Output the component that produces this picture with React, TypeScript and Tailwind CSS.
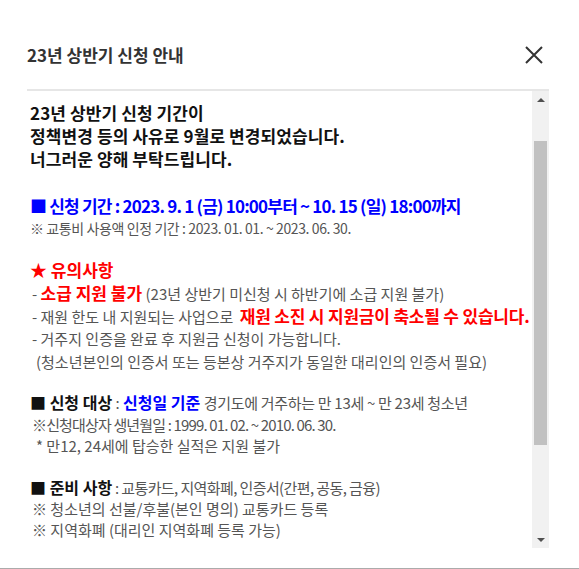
export default function App() {
  return (
    <div
      className="w-[579px] h-[569px] bg-white border-b border-[#ababab] flex flex-col pl-[27px] pr-[30px]"
      style={{ fontFamily: '"Noto Sans CJK KR", "Noto Sans", sans-serif' }}
    >
      {/* Header */}
      <div className="h-[89px] pt-[21px] flex items-center justify-between shrink-0">
        <h2 className="text-[17px] font-bold text-[#333]">23년 상반기 신청 안내</h2>
        <button className="mr-[6px]">
          <svg width="18" height="18" viewBox="0 0 18 18" fill="none" stroke="#333" strokeWidth="2">
            <path d="M1 1L17 17M17 1L1 17" />
          </svg>
        </button>
      </div>
      <div className="h-[2px] bg-[#e6e6e6] shrink-0" />

      {/* Body */}
      <div className="flex h-[457px] shrink-0">
        <div className="flex-1 overflow-hidden pl-[3px] pt-[10px]">
          <div className="text-[17px] font-bold text-[#111] leading-[23px] tracking-[0.1px]">
            <p>23년 상반기 신청 기간이</p>
            <p>정책변경 등의 사유로 9월로 변경되었습니다.</p>
            <p>너그러운 양해 부탁드립니다.</p>
          </div>

          <p className="mt-[24px] text-[17px] font-bold text-[#0000ff] leading-[23px] tracking-[-0.8px]">
            ■ 신청 기간 : 2023. 9. 1 (금) 10:00부터 ~ 10. 15 (일) 18:00까지
          </p>
          <p className="text-[14px] text-[#555] leading-[22px] tracking-[-0.4px]">
            ※ 교통비 사용액 인정 기간 : 2023. 01. 01. ~ 2023. 06. 30.
          </p>

          {/* 유의사항 */}
          <p className="mt-[19px] text-[17px] font-bold text-[#ff0000] leading-[23px]">★ 유의사항</p>
          <div className="mt-[2px] text-[15px] text-[#555] leading-[22.5px]">
            <p className="pl-[2px]">
              - <span className="inline-block text-[17px] leading-[18px] font-bold text-[#ff0000]">소급 지원 불가</span> (23년 상반기 미신청 시 하반기에 소급 지원 불가)
            </p>
            <p className="pl-[2px]">
              - 재원 한도 내 지원되는 사업으로{" "}
              <span className="inline-block ml-[3px] text-[17px] leading-[18px] font-bold text-[#ff0000] tracking-[-0.2px]">
                재원 소진 시 지원금이 축소될 수 있습니다.
              </span>
            </p>
            <p className="pl-[2px]">- 거주지 인증을 완료 후 지원금 신청이 가능합니다.</p>
            <p className="pl-[6px]">(청소년본인의 인증서 또는 등본상 거주지가 동일한 대리인의 인증서 필요)</p>
          </div>

          {/* 신청 대상 */}
          <div className="mt-[19px] text-[15px] text-[#555] leading-[21.5px]">
            <p>
              <span className="inline-block text-[16px] leading-[18px] font-bold text-[#111]">■ 신청 대상</span> :{" "}
              <span className="inline-block text-[16px] leading-[18px] font-bold text-[#0000ff]">신청일 기준</span>{" "}
              <span className="tracking-[-0.3px]">경기도에 거주하는 만 13세 ~ 만 23세 청소년</span>
            </p>
            <p className="pl-[2px] tracking-[-0.85px]">※신청대상자 생년월일 : 1999. 01. 02. ~ 2010. 06. 30.</p>
            <p className="pl-[6px]">* 만12, 24세에 탑승한 실적은 지원 불가</p>
          </div>

          {/* 준비 사항 */}
          <div className="mt-[20px] text-[15px] text-[#555] leading-[21px]">
            <p>
              <span className="inline-block text-[16px] leading-[18px] font-bold text-[#111]">■ 준비 사항</span>
              <span className="tracking-[-0.6px]"> : 교통카드, 지역화폐, 인증서(간편, 공동, 금융)</span>
            </p>
            <p className="pl-[2px]">※ 청소년의 선불/후불(본인 명의) 교통카드 등록</p>
            <p className="pl-[2px]">※ 지역화폐 (대리인 지역화폐 등록 가능)</p>
          </div>
        </div>

        {/* Scrollbar */}
        <div className="w-[17px] bg-[#f1f1f1] flex flex-col shrink-0">
          <div className="h-[17px] flex items-center justify-center">
            <div className="w-0 h-0 border-l-[4px] border-r-[4px] border-b-[4px] border-l-transparent border-r-transparent border-b-[#505050]" />
          </div>
          <div className="flex-1 px-[2px]">
            <div className="mt-[33px] h-[304px] bg-[#c1c1c1]" />
          </div>
          <div className="h-[17px] flex items-center justify-center">
            <div className="w-0 h-0 border-l-[4px] border-r-[4px] border-t-[4px] border-l-transparent border-r-transparent border-t-[#505050]" />
          </div>
        </div>
      </div>
    </div>
  );
}
